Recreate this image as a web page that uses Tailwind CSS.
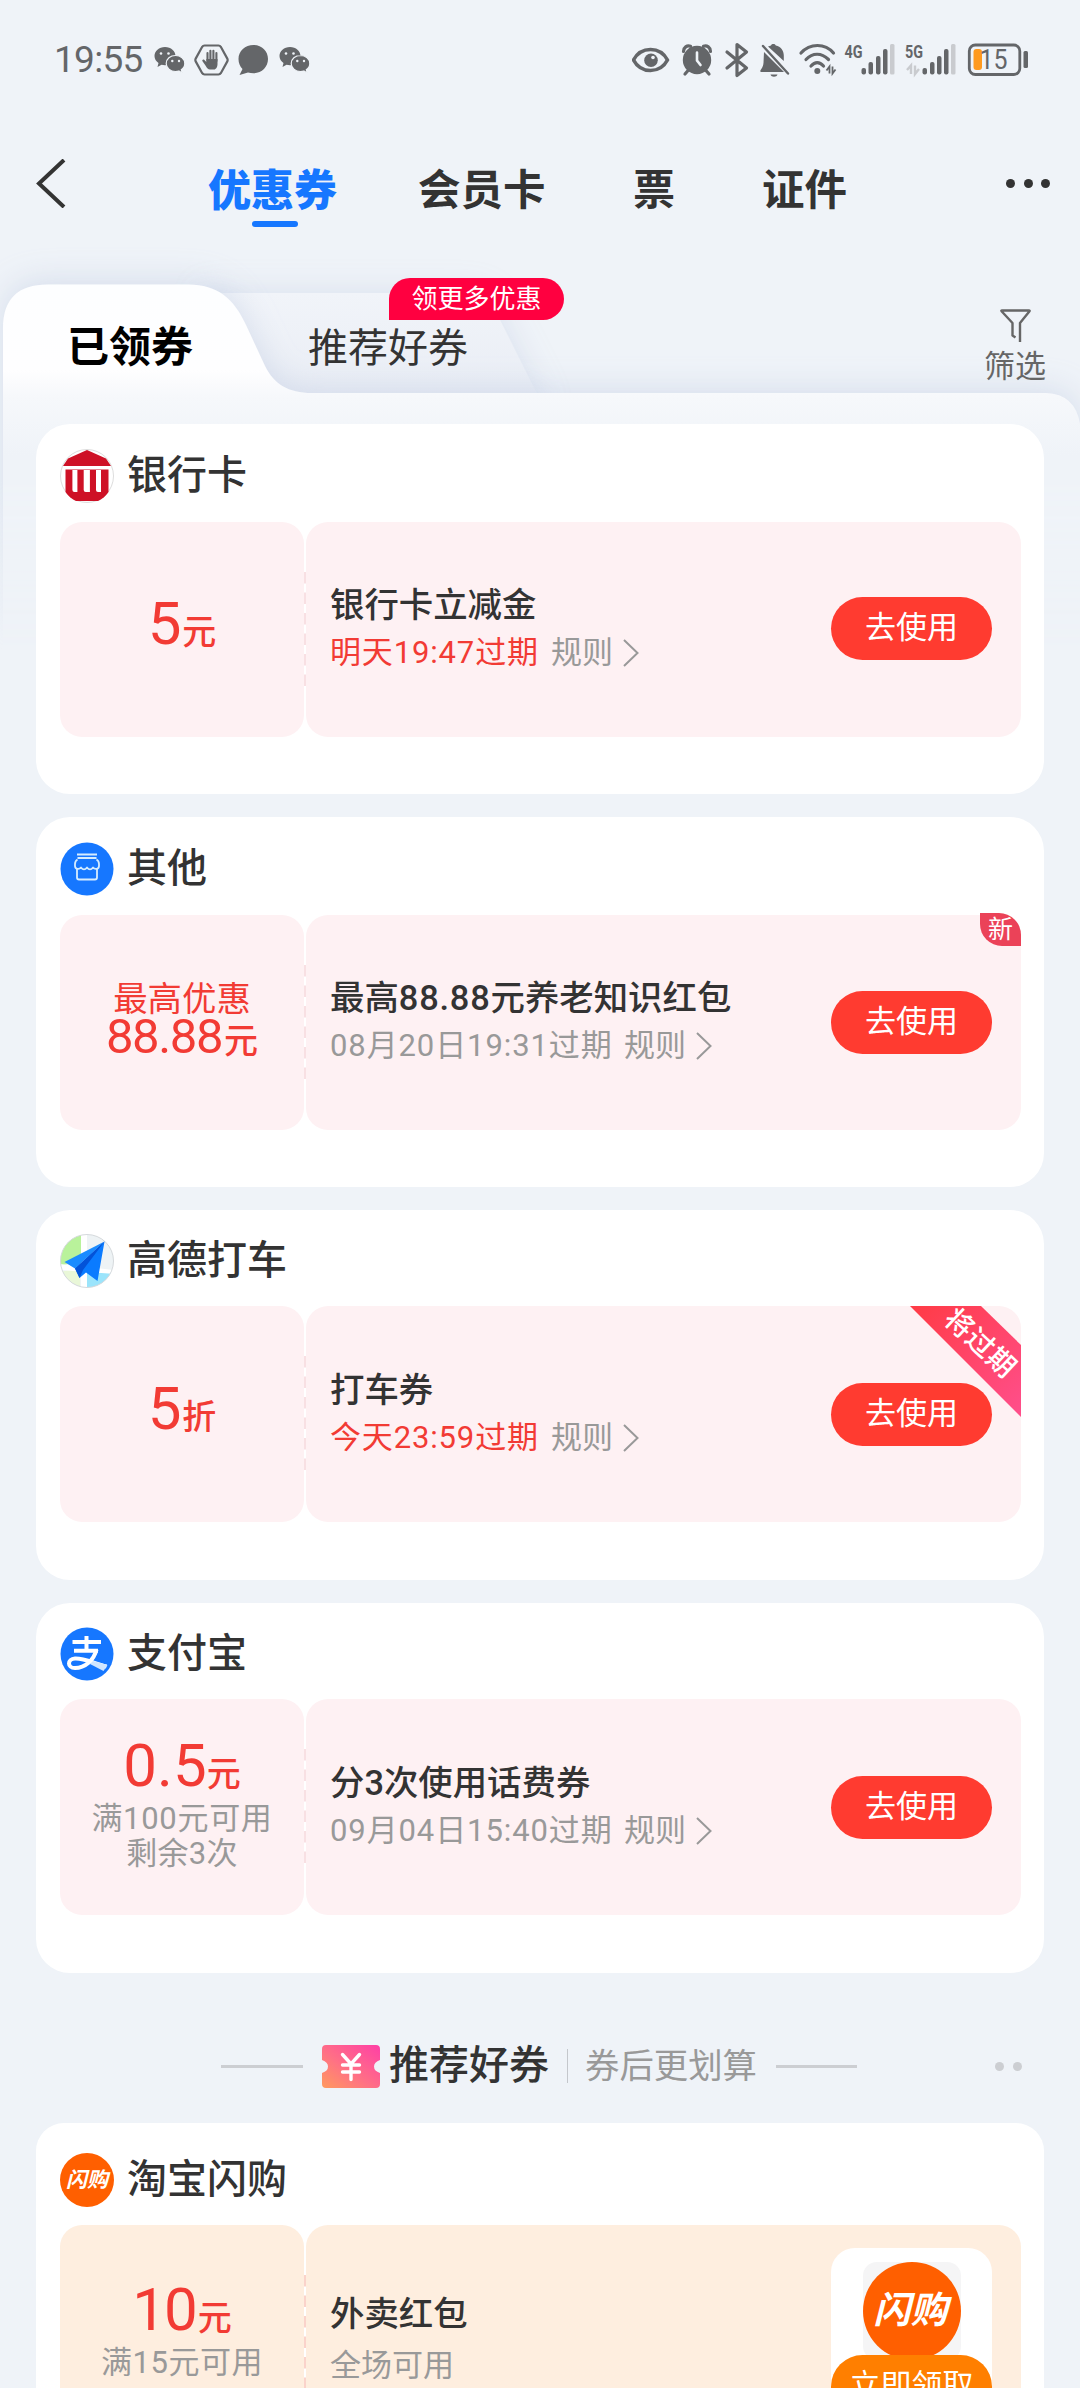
<!DOCTYPE html>
<html lang="zh-CN">
<head>
<meta charset="utf-8">
<title>优惠券</title>
<script src="https://cdn.jsdelivr.net/npm/@tailwindcss/browser@4"></script>
</head>
<body class="bg-[#eff3f8]">
<div class="relative w-[1080px] h-[2388px] overflow-hidden bg-[#eff3f8] font-[Roboto,'Noto_Sans_CJK_SC',sans-serif] text-[#333]">

  <!-- shared symbols -->
  <svg class="absolute w-0 h-0">
    <defs>
      <symbol id="chev" viewBox="0 0 16 28"><path d="M1 1L14.500 14L1 27" fill="none" stroke="#999" stroke-width="2"/></symbol>
      <symbol id="dash" viewBox="0 0 2 115"><path d="M1 0V115" fill="none" stroke="currentColor" stroke-width="2" stroke-dasharray="11.500 9"/></symbol>
      <symbol id="wechat" viewBox="0 0 31 27">
        <path d="M11 1C5 1 0.500 5 0.500 10c0 3 1.500 5.300 4 7L3.500 21l4-2.200c1.200.3 2.200.5 3.500.5C17 19.300 21.500 15 21.500 10S17 1 11 1z" fill="#646669"/>
        <path d="M21.500 9.500c-5.200 0-9.300 3.500-9.300 8s4.100 8 9.300 8c1.200 0 2.300-.2 3.300-.5l3.500 2-1-3.300c2.200-1.500 3.500-3.600 3.500-6.200 0-4.500-4.100-8-9.300-8z" fill="#646669" stroke="#eff3f8" stroke-width="1.200"/>
        <g fill="#eff3f8"><circle cx="7" cy="7.500" r="1.300"/><circle cx="14.500" cy="7.500" r="1.300"/><circle cx="18.300" cy="15" r="1.200"/><circle cx="25" cy="15" r="1.200"/></g>
      </symbol>
    </defs>
  </svg>

  <!-- status bar -->
  <header class="relative z-10 flex h-[119px] items-center justify-between pl-[54px] pr-[52px] text-[#646669]">
    <div class="flex items-center">
      <span class="w-[100px] text-[37px] leading-none tracking-[-0.700px]">19:55</span>
      <svg class="w-[31px] h-[27px]"><use href="#wechat"/></svg>
      <svg class="ml-[9px] w-[35px] h-[32px]" viewBox="0 0 35 32">
        <path d="M10.500 1.500H24.500Q26 1.500 26.800 2.800L33.300 14.600Q34 16 33.300 17.400L26.800 29.200Q26 30.500 24.500 30.500H10.500Q9 30.500 8.200 29.200L1.700 17.400Q1 16 1.700 14.600L8.200 2.800Q9 1.500 10.500 1.500Z" fill="none" stroke="#646669" stroke-width="2.200"/>
        <path d="M13.500 17V9M16.400 16V6.800M19.400 16V6.800M22.400 17V9" stroke="#646669" stroke-width="2.100" stroke-linecap="round"/>
        <path d="M12.400 15H23.500V20c0 3-1.500 5.500-3.500 5.500h-4c-2 0-3-1.500-4.200-3.500l-3.300-4.800c-.8-1.200.8-2.300 1.900-1.300l2 2z" fill="#646669"/>
      </svg>
      <svg class="ml-[8px] w-[32px] h-[32px]" viewBox="0 0 32 32"><path d="M16.500 1C8.200 1 1.500 7 1.500 15c0 4 1.500 7.500 4 10L2.500 31l8.500-2.600c1.700.5 3.500.8 5.500.8C24.800 29.200 31 23 31 15S24.800 1 16.500 1z" fill="#646669"/></svg>
      <svg class="ml-[10px] w-[31px] h-[27px]"><use href="#wechat"/></svg>
    </div>
    <svg class="w-[396px] h-[40px]" viewBox="632 40 396 40">
      <path d="M633.500 60C641 46 660 46 667.500 60C660 74 641 74 633.500 60Z" fill="none" stroke="#646669" stroke-width="3.600" stroke-linejoin="round"/>
      <circle cx="651" cy="60.300" r="6.800" fill="#646669"/><circle cx="653" cy="57.500" r="1.800" fill="#eff3f8"/>
      <circle cx="697" cy="60" r="14.200" fill="#646669"/>
      <path d="M683.500 51.500C683.500 47.500 687 45 690.500 46.300M710.500 51.500C710.500 47.500 707 45 703.500 46.300M688.500 70L685 74M705.500 70L709 74" stroke="#646669" stroke-width="3.200" stroke-linecap="round" fill="none"/>
      <path d="M697 52.500V60.500L700.500 65" stroke="#eff3f8" stroke-width="2.600" stroke-linecap="round" fill="none"/>
      <path d="M727 52L746.500 68L737 75.500V44.500L746.500 52L727 68" fill="none" stroke="#646669" stroke-width="3.200" stroke-linejoin="round" stroke-linecap="round"/>
      <path d="M773.500 44c1.200 0 2 .6 2.300 1.500 5 1.200 8 5 8 10V61L768 46.500c1-.5 2-.9 3-1.100.4-.9 1.300-1.400 2.500-1.400zM764 52L784 72H761.500C760 72 760 70.500 761 69.500c2-2.500 2.600-5 2.600-9zM770.500 74.500h7c-.7 3-6.300 3-7 0z" fill="#646669"/>
      <path d="M763 46L788 73.500" stroke="#646669" stroke-width="2.400" stroke-linecap="round"/>
      <path d="M801 53C810 43 825 43 833.500 53M806 59.500C812.500 52.500 821.500 52.500 828.500 59.500M811 66C815 61.500 819.500 61.500 823.500 66" fill="none" stroke="#646669" stroke-width="3.200" stroke-linecap="round"/>
      <circle cx="817.300" cy="71" r="3" fill="#646669"/>
      <path d="M829.500 73.500V66.500L826.500 70.500M832.500 66.500V73.500L835.500 69.500" stroke="#646669" stroke-width="1.800" fill="none"/>
      <text x="844.500" y="57.500" font-size="19" font-weight="700" textLength="18" lengthAdjust="spacingAndGlyphs" fill="#646669">4G</text>
      <g fill="#646669"><rect x="861.500" y="68" width="4.500" height="6.500" rx="2"/><rect x="868.500" y="62" width="4.500" height="12.500" rx="2"/><rect x="876" y="56" width="4.500" height="18.500" rx="2"/><rect x="883" y="49" width="4.500" height="25.500" rx="2"/></g>
      <rect x="890" y="44" width="4.500" height="30.500" rx="1.500" fill="#c9cbcf"/>
      <text x="905" y="57.500" font-size="19" font-weight="700" textLength="18" lengthAdjust="spacingAndGlyphs" fill="#646669">5G</text>
      <path d="M911 74V65.500L907 70M915 65.500V74L919 69" stroke="#c9cbcf" stroke-width="2.400" fill="none"/>
      <g fill="#646669"><rect x="922.500" y="68" width="4.500" height="6.500" rx="2"/><rect x="930" y="62" width="4.500" height="12.500" rx="2"/><rect x="937" y="56" width="4.500" height="18.500" rx="2"/><rect x="944" y="49" width="4.500" height="25.500" rx="2"/></g>
      <rect x="951" y="44" width="4.500" height="30.500" rx="1.500" fill="#c9cbcf"/>
      <rect x="969.300" y="45" width="50.500" height="29.500" rx="6" fill="none" stroke="#646669" stroke-width="2.800"/>
      <rect x="1023.500" y="51" width="4.500" height="17" rx="1.500" fill="#646669"/>
      <rect x="973.500" y="49" width="8.500" height="21" rx="3" fill="#ff9a1e"/>
      <text x="979.500" y="69" font-size="27" textLength="28" lengthAdjust="spacingAndGlyphs" fill="#646669">15</text>
    </svg>
  </header>

  <!-- top navigation -->
  <nav class="relative z-10 flex h-[144px] items-center pl-[36px] text-[42px] leading-none font-bold text-[#333]">
    <svg class="-mt-[15px] w-[30px] h-[49px]" viewBox="0 0 30 49"><path d="M28 1L3 24.500L28 48" fill="none" stroke="#333" stroke-width="4"/></svg>
    <span class="relative ml-[142px] w-[129px] text-[43px] font-black text-[#1677ff]">优惠券<i class="absolute left-[44px] top-[51px] w-[46px] h-[6px] rounded-full bg-[#1677ff]"></i></span>
    <span class="ml-[81px] w-[128px] text-[42.500px]">会员卡</span>
    <span class="ml-[87px] w-[42px]">票</span>
    <span class="ml-[87px] w-[85px] text-[42.500px]">证件</span>
    <span class="ml-[159px] -mt-[15px] flex gap-[8.500px]">
      <i class="size-[9px] rounded-full bg-[#333]"></i><i class="size-[9px] rounded-full bg-[#333]"></i><i class="size-[9px] rounded-full bg-[#333]"></i>
    </span>
  </nav>

  <!-- folder tabs -->
  <svg class="absolute left-0 top-[224px] w-[1080px] h-[476px]" viewBox="0 224 1080 476">
    <defs>
      <linearGradient id="panel" gradientUnits="userSpaceOnUse" x1="0" y1="285" x2="0" y2="455"><stop offset="0" stop-color="#fdfeff"/><stop offset=".5" stop-color="#fefeff"/><stop offset=".66" stop-color="#f6f8fb"/><stop offset="1" stop-color="#eff3f8"/></linearGradient>
      <linearGradient id="tab2" x1="0" y1="0" x2="0" y2="1"><stop offset="0" stop-color="#f1f4f9"/><stop offset="1" stop-color="#e8ecf4"/></linearGradient>
      <linearGradient id="fade" gradientUnits="userSpaceOnUse" x1="0" y1="480" x2="0" y2="650"><stop offset="0" stop-color="#fff"/><stop offset="1" stop-color="#000"/></linearGradient>
      <mask id="m"><rect x="0" y="224" width="1080" height="476" fill="url(#fade)"/></mask>
      <filter id="sh" x="-10%" y="-20%" width="120%" height="140%"><feDropShadow dx="0" dy="-4" stdDeviation="15" flood-color="#b4c0dc" flood-opacity=".4"/></filter>
      <filter id="sh2" x="-20%" y="-40%" width="140%" height="180%"><feDropShadow dx="2" dy="-3" stdDeviation="14" flood-color="#b4c0dc" flood-opacity=".32"/></filter>
    </defs>
    <g mask="url(#m)">
      <path d="M200 293H465Q486 293 496 312L545 410H200Z" fill="url(#tab2)" filter="url(#sh2)"/>
      <path d="M3 720V328Q3 284.500 48 284.500H188C218 284.500 234 299 246 325L265 366C274 384 288 393 312 393H1046Q1075 394 1080 424V720Z" fill="url(#panel)" filter="url(#sh)"/>
    </g>
  </svg>
  <div class="relative flex h-[161px] leading-none">
    <span class="ml-[67px] mt-[64px] w-[126px] h-[42px] text-[42px] font-bold text-black">已领券</span>
    <span class="ml-[115px] mt-[66px] w-[160px] h-[40px] text-[40px]">推荐好券</span>
    <span class="absolute left-[389px] top-[15px] flex h-[42px] w-[175px] items-center justify-center rounded-[21px] rounded-bl-none bg-[#ff0040] text-[26px] text-white">领更多优惠</span>
    <div class="ml-[516px] mt-[46px] flex w-[62px] flex-col items-center text-[31px] text-[#666]">
      <svg class="w-[31px] h-[34px]" viewBox="0 0 31 34"><path d="M20 33V14L29.500 2.200Q30 1.500 29 1.500H2Q1 1.500 1.600 2.200L12.500 14V26.500L15.500 28.500" fill="none" stroke="#666" stroke-width="2.400" stroke-linejoin="round"/></svg>
      <span class="mt-[8px]">筛选</span>
    </div>
  </div>

  <!-- coupon groups -->
  <main class="relative ml-[36px] flex w-[1008px] flex-col gap-[23px]">

    <section class="h-[370px] rounded-[34px] bg-white pl-[24px] pr-[23px]">
      <h2 class="flex h-[98px] items-center gap-[13px] pt-[6px] text-[40px] leading-none font-medium">
        <svg class="size-[54px]" viewBox="0 0 54 54">
          <circle cx="27" cy="27" r="26.500" fill="#fff" stroke="#ddd"/>
          <path d="M27 1L46 9.500L51 17H3L8 9.500Z" fill="#ce1126"/>
          <path d="M5.500 20.500H48.500V43C45 48 42 50 38 52H16C12 50 9 48 5.500 43Z" fill="#ce1126"/>
          <path d="M12.400 21H17.400V43H14.400Q12.400 43 12.400 41ZM23.700 21H29.900V43H25.700Q23.700 43 23.700 41ZM36 21H41V43H38Q36 43 36 41Z" fill="#fff"/>
        </svg>银行卡</h2>
      <div class="relative flex h-[215px] gap-[2px]">
        <div class="flex w-[244px] flex-col items-center justify-center rounded-[22px] bg-[#fef1f3] pb-3 text-[#f23b34]">
          <p class="flex h-[70px] items-baseline gap-[1px] text-[60px] leading-[70px]">5<span class="text-[34px] font-medium">元</span></p>
        </div>
        <svg class="absolute left-[244px] top-[50px] w-[2px] h-[115px] text-[#f8e0e3]"><use href="#dash"/></svg>
        <div class="flex flex-1 items-center justify-between rounded-[22px] bg-[#fef1f3] pb-[2px] pl-6 pr-[29px]">
          <div>
            <h3 class="text-[34.400px] leading-[48px] font-medium">银行卡立减金</h3>
            <p class="flex items-center text-[31px] leading-[48px] text-[#999]"><span class="w-[221px] tracking-[0.850px] text-[#f23b34]">明天19:47过期</span>规则<svg class="ml-[10px] w-[16px] h-[28px]"><use href="#chev"/></svg></p>
          </div>
          <button class="h-[63px] w-[161px] rounded-full bg-[#ff3b30] text-[31px] text-white">去使用</button>
        </div>
      </div>
    </section>

    <section class="h-[370px] rounded-[34px] bg-white pl-[24px] pr-[23px]">
      <h2 class="flex h-[98px] items-center gap-[13px] pt-[6px] text-[40px] leading-none font-medium">
        <svg class="size-[54px]" viewBox="0 0 54 54">
          <circle cx="27" cy="27" r="26.500" fill="#1677ff"/>
          <g fill="none" stroke="#d5ecff" stroke-width="1.800" stroke-linejoin="round"><path d="M17 12.500H37M17.500 16H36.500M17.500 17.500Q15 19 15 22V24C15 27 19 28 21 25.500C23 28 25 28 27 25.500C29 28 31 28 33 25.500C35 28 39 27 39 24V22Q39 19 36.500 17.500"/><path d="M17 27V35.500Q17 37.500 19 37.500H35Q37 37.500 37 35.500V27"/></g>
        </svg>其他</h2>
      <div class="relative flex h-[215px] gap-[2px]">
        <div class="flex w-[244px] flex-col items-center justify-center rounded-[22px] bg-[#fef1f3] pb-[10px] text-[#f23b34]">
          <p class="text-[34.400px] leading-[38px]">最高优惠</p>
          <p class="flex h-[38px] items-baseline gap-[2px] text-[49px] leading-[38px] tracking-[-1.400px]">88.88<span class="text-[34px] font-medium tracking-normal">元</span></p>
        </div>
        <svg class="absolute left-[244px] top-[50px] w-[2px] h-[115px] text-[#f8e0e3]"><use href="#dash"/></svg>
        <div class="flex flex-1 items-center justify-between rounded-[22px] bg-[#fef1f3] pb-[1px] pl-6 pr-[29px]">
          <div>
            <h3 class="text-[34.400px] leading-[48px] font-medium whitespace-nowrap">最高<span class="tracking-[0.800px]">88.88</span>元养老知识红包</h3>
            <p class="flex items-center text-[31px] leading-[48px] text-[#999]"><span class="w-[294px] tracking-[0.900px]">08月20日19:31过期</span>规则<svg class="ml-[10px] w-[16px] h-[28px]"><use href="#chev"/></svg></p>
          </div>
          <button class="h-[63px] w-[161px] rounded-full bg-[#ff3b30] text-[31px] text-white">去使用</button>
        </div>
        <span class="absolute right-0 -top-[2px] flex h-[33px] w-[41px] items-center justify-center rounded-tr-[22px] rounded-bl-[22px] bg-[#eb4258] text-[25px] leading-none text-white">新</span>
      </div>
    </section>

    <section class="h-[370px] rounded-[34px] bg-white pl-[24px] pr-[23px]">
      <h2 class="flex h-[96px] items-center gap-[13px] pt-[6px] text-[40px] leading-none font-medium">
        <svg class="size-[54px]" viewBox="0 0 54 54">
          <defs><clipPath id="gc"><circle cx="27" cy="27" r="26.500"/></clipPath></defs>
          <g clip-path="url(#gc)"><rect width="54" height="54" fill="#eef3f5"/><path d="M0 0H22V26L0 32Z" fill="#b9f29b"/><path d="M0 38L20 34V54H0Z" fill="#e9f7d8"/><path d="M26 38H54V54H26Z" fill="#9be4fb"/><path d="M21 0H27V54H21ZM0 30L54 36V40L0 36Z" fill="#fff"/></g>
          <circle cx="27" cy="27" r="26.500" fill="none" stroke="#d5d9dc"/>
          <path d="M44.500 7.500L4.500 28L15 34.500Z" fill="#1a8cff"/><path d="M44.500 7.500L15 34.500L19.500 44L26 38.500L37.500 47Z" fill="#0a7bff"/><path d="M15 34.500L19.500 44L23 36L44.500 7.500Z" fill="#0353d8"/>
        </svg>高德打车</h2>
      <div class="relative flex h-[216px] gap-[2px]">
        <div class="flex w-[244px] flex-col items-center justify-center rounded-[22px] bg-[#fef1f3] pb-[10px] text-[#f23b34]">
          <p class="flex h-[70px] items-baseline gap-[1px] text-[60px] leading-[70px]">5<span class="text-[34px] font-medium">折</span></p>
        </div>
        <svg class="absolute left-[244px] top-[50px] w-[2px] h-[115px] text-[#f8e0e3]"><use href="#dash"/></svg>
        <div class="flex flex-1 items-center justify-between rounded-[22px] bg-[#fef1f3] pl-6 pr-[29px]">
          <div>
            <h3 class="text-[34.400px] leading-[48px] font-medium">打车券</h3>
            <p class="flex items-center text-[31px] leading-[48px] text-[#999]"><span class="w-[221px] tracking-[0.850px] text-[#f23b34]">今天23:59过期</span>规则<svg class="ml-[10px] w-[16px] h-[28px]"><use href="#chev"/></svg></p>
          </div>
          <button class="relative z-10 h-[63px] w-[161px] rounded-full bg-[#ff3b30] text-[31px] text-white">去使用</button>
        </div>
        <svg class="absolute right-0 top-0 w-[111px] h-[111px]" viewBox="0 0 111 111">
          <defs><linearGradient id="rib" x1="0" y1="0" x2="1" y2="1"><stop offset="0" stop-color="#ff3b45"/><stop offset="1" stop-color="#ff4f8c"/></linearGradient></defs>
          <path d="M0 0H71L111 39V111Z" fill="url(#rib)"/>
          <text transform="translate(70.500 37) rotate(43)" x="0" y="10" text-anchor="middle" font-size="28" font-weight="500" letter-spacing=".6" fill="#fff">将过期</text>
        </svg>
      </div>
    </section>

    <section class="h-[370px] rounded-[34px] bg-white pl-[24px] pr-[23px]">
      <h2 class="flex h-[96px] items-center gap-[13px] pt-[6px] text-[40px] leading-none font-medium">
        <svg class="size-[54px]" viewBox="0 0 54 54">
          <circle cx="27" cy="27" r="26.500" fill="#1677ff"/>
          <g fill="none" stroke="#fff" stroke-width="4"><path d="M12.500 15H41M26.500 9V24M14 23.800H38"/><path d="M36.500 22.500C34 33 25 41 15 41C7 41 7 32 15 31.500C24 31 33 36 46.500 39.500"/></g>
          <path d="M33 34L47.500 38L43.500 44L30 37Z" fill="#cfe5ff"/>
        </svg>支付宝</h2>
      <div class="relative flex h-[216px] gap-[2px]">
        <div class="flex w-[244px] flex-col items-center justify-center rounded-[22px] bg-[#fef1f3] pb-3 text-[#f23b34]">
          <p class="flex h-[70px] items-baseline text-[60px] leading-[70px]">0.5<span class="text-[34px] font-medium">元</span></p>
          <p class="text-[31px] leading-[35px] tracking-[0.700px] text-[#999]">满100元可用</p>
          <p class="text-[31px] leading-[35px] tracking-[0.300px] text-[#999]">剩余3次</p>
        </div>
        <svg class="absolute left-[244px] top-[50px] w-[2px] h-[115px] text-[#f8e0e3]"><use href="#dash"/></svg>
        <div class="flex flex-1 items-center justify-between rounded-[22px] bg-[#fef1f3] pl-6 pr-[29px]">
          <div>
            <h3 class="text-[34.400px] leading-[48px] font-medium">分3次使用话费券</h3>
            <p class="flex items-center text-[31px] leading-[48px] text-[#999]"><span class="w-[294px] tracking-[0.900px]">09月04日15:40过期</span>规则<svg class="ml-[10px] w-[16px] h-[28px]"><use href="#chev"/></svg></p>
          </div>
          <button class="h-[63px] w-[161px] rounded-full bg-[#ff3b30] text-[31px] text-white">去使用</button>
        </div>
      </div>
    </section>
  </main>

  <!-- recommendation heading -->
  <div class="flex h-[150px] items-center pt-[36px] pl-[221px] leading-none">
    <i class="h-[3px] w-[82px] bg-[#ccced2]"></i>
    <svg class="ml-[19px] w-[58px] h-[43px]" viewBox="0 0 58 43">
      <defs><linearGradient id="tk" x1="0" y1="1" x2="1" y2="0"><stop offset="0" stop-color="#ff9a5e"/><stop offset=".45" stop-color="#ff6f86"/><stop offset="1" stop-color="#ff3fa6"/></linearGradient></defs>
      <path d="M4 0H54Q58 0 58 4V15Q52 17 52 21.500Q52 26 58 28V39Q58 43 54 43H4Q0 43 0 39V28Q6 26 6 21.500Q6 17 0 15V4Q0 0 4 0Z" fill="url(#tk)"/>
      <path d="M20.500 9.500L29 19L37.500 9.500M29 19V34.500M20.500 20H37.500M20.500 27H37.500" fill="none" stroke="#fff" stroke-width="3.400" stroke-linecap="round"/>
    </svg>
    <span class="ml-[9px] w-[160px] text-[40px] font-medium">推荐好券</span>
    <i class="ml-[18px] h-[34px] w-[1px] bg-[#c4c7cc]"></i>
    <span class="ml-[17px] w-[172px] text-[34.400px] text-[#999]">券后更划算</span>
    <i class="ml-[19px] h-[3px] w-[81px] bg-[#ccced2]"></i>
    <i class="ml-[138px] size-[9px] rounded-full bg-[#ccced2]"></i>
    <i class="ml-[9px] size-[9px] rounded-full bg-[#ccced2]"></i>
  </div>

  <section class="ml-[36px] h-[380px] w-[1008px] rounded-[28px] bg-white pl-[24px] pr-[23px]">
    <h2 class="flex h-[102px] items-center gap-[13px] pt-[12px] text-[40px] leading-none font-medium">
      <span class="flex size-[54px] items-center justify-center rounded-full bg-[#ff5f00] text-[21px] font-bold italic text-white">闪购</span>淘宝闪购</h2>
    <div class="relative flex h-[216px] gap-[2px]">
      <div class="flex w-[244px] flex-col items-center justify-center rounded-[22px] bg-[#feeedf] pb-3 text-[#f23b34]">
        <p class="flex h-[70px] items-baseline gap-[2px] text-[60px] leading-[70px] tracking-[-2px]">10<span class="text-[34px] font-medium tracking-normal">元</span></p>
        <p class="text-[31px] leading-[35px] tracking-[0.500px] text-[#999]">满15元可用</p>
      </div>
      <svg class="absolute left-[244px] top-[50px] w-[2px] h-[115px] text-[#fad3cb]"><use href="#dash"/></svg>
      <div class="flex flex-1 justify-between rounded-[22px] bg-[#feeedf] pl-6 pr-[29px]">
        <div class="pt-[65px]">
          <h3 class="text-[34.400px] leading-[48px] font-medium">外卖红包</h3>
          <p class="mt-[4px] text-[31px] leading-[48px] text-[#999]">全场可用</p>
        </div>
        <div class="mt-[23px] flex h-[170px] w-[161px] flex-col items-center rounded-[24px] bg-white pt-[14px]">
          <div class="rounded-[14px] bg-[#f5f5f6]"><span class="flex size-[98px] items-center justify-center rounded-full bg-[#ff5f00] pr-[2px] text-[37px] font-bold italic text-white">闪购</span></div>
          <button class="-mt-[5px] h-[63px] w-[161px] shrink-0 rounded-full bg-[#ff7f00] text-[31px] text-white">立即领取</button>
        </div>
      </div>
    </div>
  </section>
</div>
</body>
</html>
